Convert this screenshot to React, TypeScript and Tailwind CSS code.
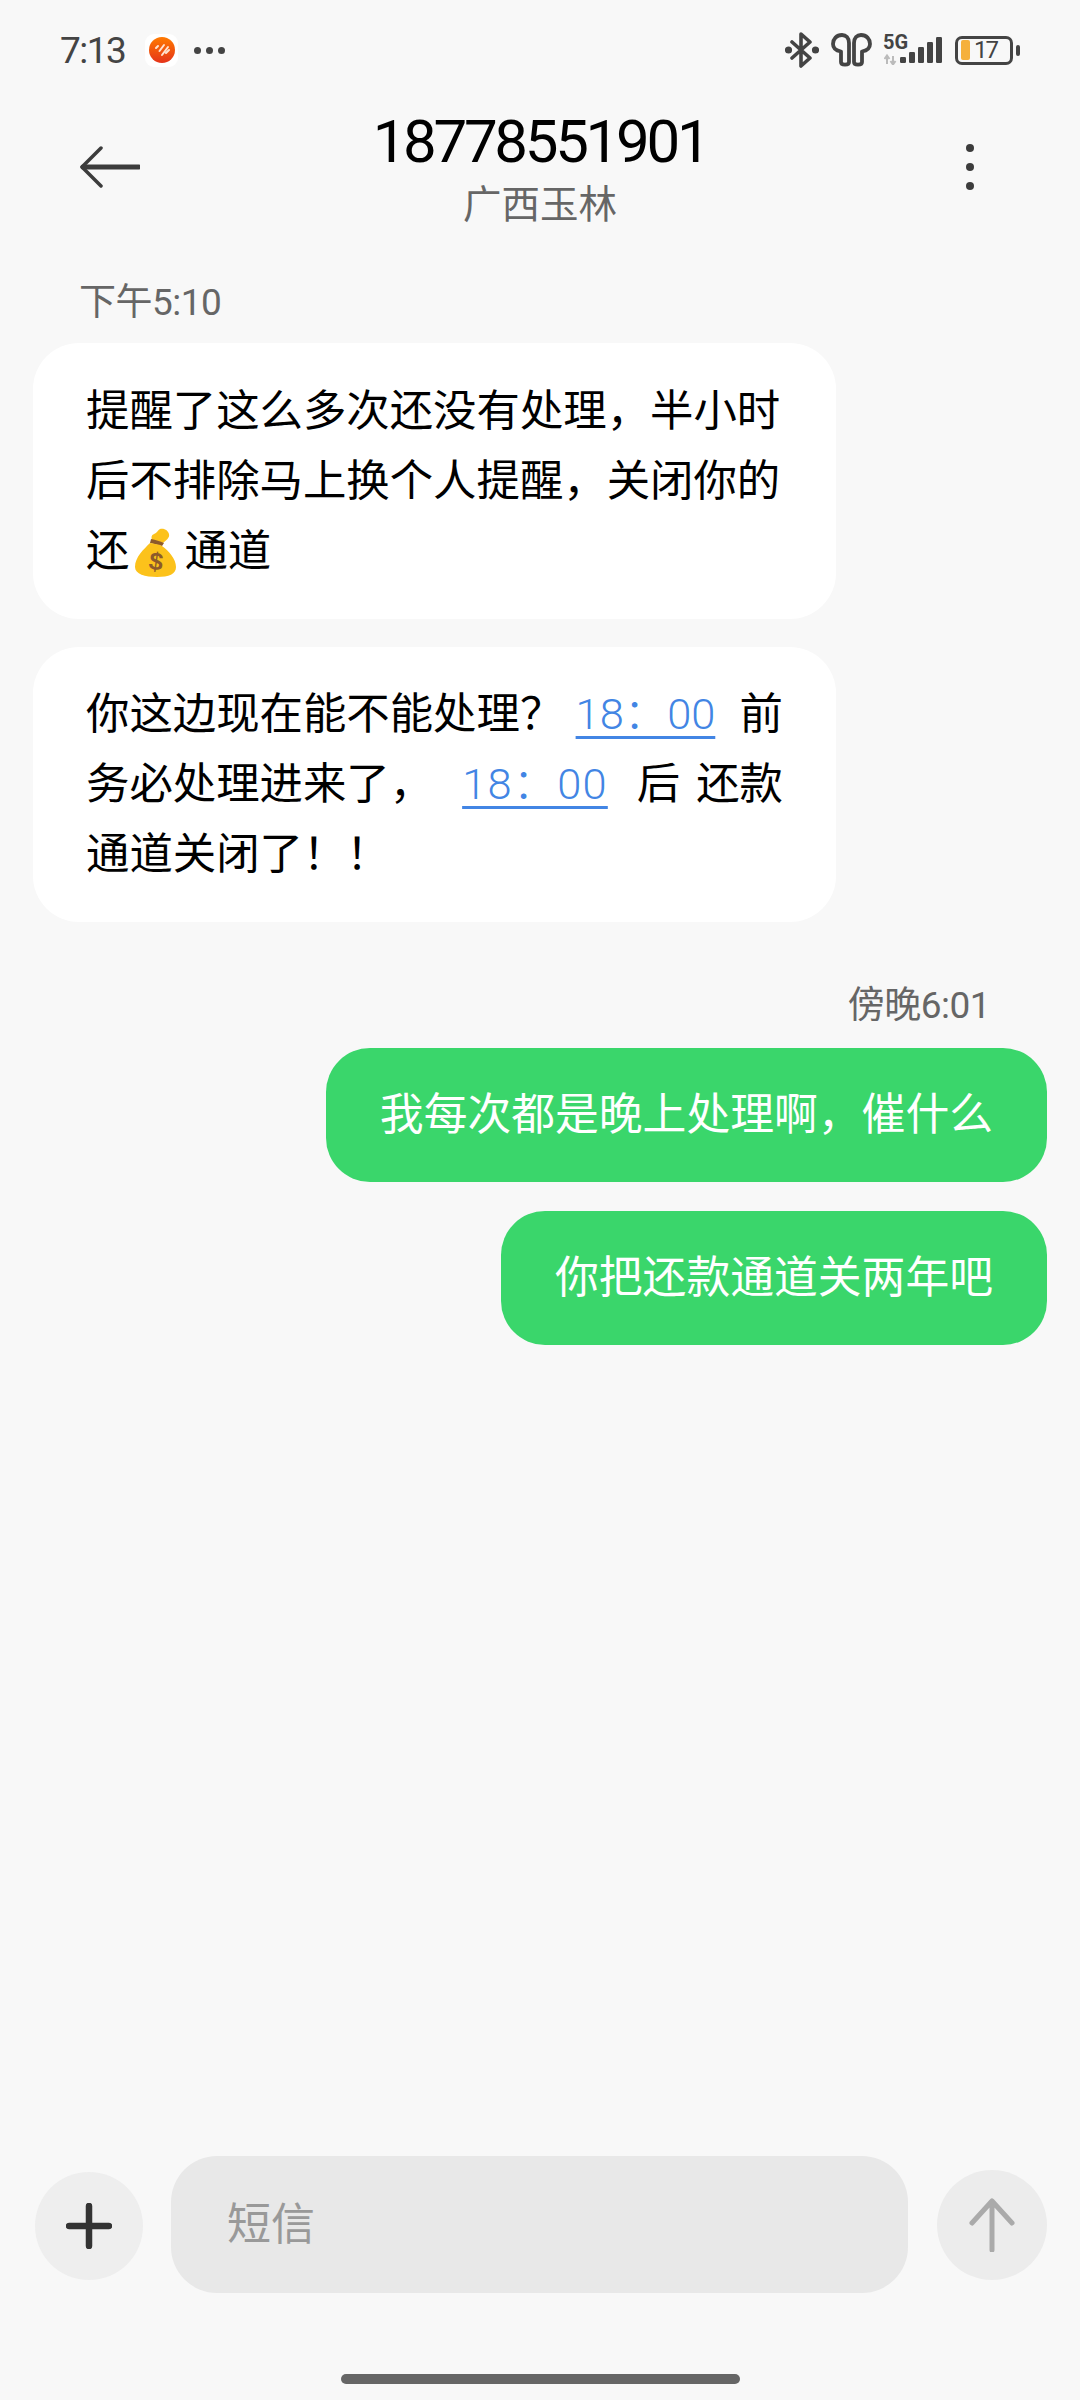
const link = "font-light text-[#4285e4] underline decoration-[3px] underline-offset-[7px]";

function AppDot() {
  return (
    <div className="ml-[20px] flex h-[33px] w-[33px] items-center justify-center rounded-[9px] bg-white">
      <svg width="26" height="26" viewBox="0 0 26 26">
        <defs>
          <linearGradient id="appGrad" x1="0" y1="0" x2="0" y2="1">
            <stop offset="0" stopColor="#ff7a00" />
            <stop offset="1" stopColor="#e5341a" />
          </linearGradient>
        </defs>
        <circle cx="13" cy="13" r="13" fill="url(#appGrad)" />
        <path d="M7 11l2-2M10.500 14l4.500-6M13 18l6-8M17 16l3-3" stroke="#ffe3d0" strokeWidth="2" strokeLinecap="round" />
      </svg>
    </div>
  );
}

function StatusIcons() {
  return (
    <div className="flex items-center">
      {/* bluetooth */}
      <svg width="34" height="36" viewBox="0 0 34 36" fill="none" stroke="#444" strokeWidth="3.600" strokeLinejoin="round" strokeLinecap="round">
        <path d="M7 10l18 16-9 8V2l9 8-18 16" />
        <circle cx="3.500" cy="18" r="1.800" fill="#444" />
        <circle cx="30.500" cy="18" r="1.800" fill="#444" />
      </svg>
      {/* earbuds */}
      <svg className="ml-[12px]" width="41" height="34" viewBox="0 0 41 34" fill="none" stroke="#444" strokeWidth="3.800" strokeLinecap="round" strokeLinejoin="round">
        <path d="M11 2C5.500 2 2 6 2 11c0 4 2.500 6.500 8 7.500V29c0 3.500 8 3.500 8 0V10c0-5-3-8-7-8z" />
        <path d="M30 2c5.500 0 9 4 9 9 0 4-2.500 6.500-8 7.500V29c0 3.500-8 3.500-8 0V10c0-5 3-8 7-8z" />
      </svg>
      {/* 5G and signal */}
      <div className="relative ml-[12px] h-[30px] w-[62px]">
        <span className="absolute left-[-1px] top-[-3px] text-[20px] font-bold leading-[20px] text-[#444]">5G</span>
        <svg className="absolute left-0 top-0" width="62" height="30" viewBox="0 0 62 30">
          <path d="M3 21v8M0.500 24L3 20.500l2.500 3.500M9 29v-8M6.500 26L9 29.500l2.500-3.500" stroke="#bbb" strokeWidth="2" fill="none" />
          <rect x="16" y="22" width="6" height="6" rx="1.200" fill="#444" />
          <rect x="25" y="17" width="6" height="11" rx="1.200" fill="#444" />
          <rect x="34" y="12" width="6" height="16" rx="1.200" fill="#444" />
          <rect x="43" y="7" width="6" height="21" rx="1.200" fill="#444" />
          <rect x="52" y="2" width="6" height="26" rx="1.200" fill="#444" />
        </svg>
      </div>
      {/* battery */}
      <div className="ml-[9px] flex items-center">
        <div className="flex h-[29px] w-[58px] items-center rounded-[7px] border-[3px] border-[#444] pl-[3px]">
          <div className="h-[20px] w-[9px] rounded-[2px] bg-[#f5b03c]" />
          <span className="ml-[4px] text-[24px] leading-[22px] tracking-[-2px] text-[#444]">17</span>
        </div>
        <div className="ml-[3px] h-[11px] w-[4px] rounded-[2px] bg-[#444]" />
      </div>
    </div>
  );
}

function MoneyBag() {
  return (
    <svg className="inline-block align-[-11px]" width="55" height="49" viewBox="0 0 55 49">
      <path d="M31 1c5-1 8 2 9 5 1 4-3 6-6 9l-11-3c-1-4 0-5 2-6 3-1 4-4 6-5z" fill="#fcc21b" />
      <path d="M22 11c5 1 9 2 13 4l-2 3-12-3z" fill="#8d5a2b" />
      <path d="M21 15c4 1 9 1 12 3 7 5 14 13 14 21 0 7-7 10-19 10S6 46 6 39c0-10 9-18 15-24z" fill="#fcc21b" />
      <text x="27" y="42" textAnchor="middle" fontSize="25" fontWeight="700" fill="#8d5a2b" fontFamily="'Liberation Sans',sans-serif" transform="rotate(8 27 34)">$</text>
    </svg>
  );
}

export default function App() {
  return (
    <div className="flex h-[2400px] w-[1080px] flex-col overflow-hidden bg-[#f8f8f8] font-[Roboto,'Noto_Sans_CJK_SC',sans-serif] text-black">
      {/* Status bar */}
      <div className="flex h-[100px] items-center justify-between pl-[60px] pr-[60px]">
        <div className="flex items-center">
          <span className="text-[37px] leading-none tracking-[-1.500px] text-[#444]">7:13</span>
          <AppDot />
          <div className="ml-[16px] flex gap-[5px]">
            <div className="h-[7px] w-[7px] rounded-full bg-[#444]" />
            <div className="h-[7px] w-[7px] rounded-full bg-[#444]" />
            <div className="h-[7px] w-[7px] rounded-full bg-[#444]" />
          </div>
        </div>
        <StatusIcons />
      </div>

      {/* Header */}
      <div className="grid h-[135px] grid-cols-[1fr_auto_1fr] items-start px-[80px]">
        <svg className="mt-[46px]" width="60" height="42" viewBox="0 0 60 42" fill="none" stroke="#3c3c3c" strokeLinecap="round" strokeLinejoin="round">
          <path d="M21 2L2 21l19 19" strokeWidth="3.500" />
          <path d="M3 21h56" strokeWidth="5" />
        </svg>
        <div className="flex flex-col items-center pt-[12px]">
          <span className="text-[60px] leading-[60px] tracking-[-3.300px]">18778551901</span>
          <span className="mt-[8px] text-[38.500px] leading-[50px] text-[#666]">广西玉林</span>
        </div>
        <div className="mt-[44px] flex flex-col items-end gap-[11px] pr-[26px]">
          <div className="h-[8px] w-[8px] rounded-full bg-[#3c3c3c]" />
          <div className="h-[8px] w-[8px] rounded-full bg-[#3c3c3c]" />
          <div className="h-[8px] w-[8px] rounded-full bg-[#3c3c3c]" />
        </div>
      </div>

      {/* Messages */}
      <div className="flex flex-col px-[33px] pt-[43px]">
        <span className="pl-[46px] text-[37px] leading-[50px] tracking-[-0.500px] text-[#666]">下午5:10</span>
        <div className="mt-[15px] w-[803px] rounded-[46px] bg-white px-[53px] pb-[32px] pt-[34px] text-[43.400px] leading-[70px]">
          <div>提醒了这么多次还没有处理，半小时</div>
          <div>后不排除马上换个人提醒，关闭你的</div>
          <div>还<MoneyBag />通道</div>
        </div>
        <div className="mt-[28px] w-[803px] rounded-[46px] bg-white px-[53px] pb-[32px] pt-[33px] text-[43.400px] leading-[70px]">
          <div className="flex justify-between">
            <span>你这边现在能不能处理？</span>
            <span className={`mr-[12px] ${link}`}>18：00</span>
            <span>前</span>
          </div>
          <div className="flex">
            <span>务必处理进来了，</span>
            <span className={`ml-[29px] tracking-[1.200px] ${link}`}>18：00</span>
            <span className="ml-[29px]">后</span>
            <span className="ml-auto">还款</span>
          </div>
          <div>通道关闭了！！</div>
        </div>
        <span className="mt-[59px] self-end pr-[57px] text-[37px] leading-[50px] tracking-[-0.500px] text-[#666]">傍晚6:01</span>
        <div className="mt-[17px] self-end rounded-[44px] bg-[#3ad66b] px-[54px] py-[32px] text-[43.800px] leading-[70px] text-white">
          我每次都是晚上处理啊，催什么
        </div>
        <div className="mt-[29px] self-end rounded-[44px] bg-[#3ad66b] px-[54px] py-[32px] text-[43.800px] leading-[70px] text-white">
          你把还款通道关两年吧
        </div>
      </div>

      {/* Input bar */}
      <div className="mt-auto flex items-center pl-[35px] pr-[33px]">
        <div className="mt-[2px] flex h-[108px] w-[108px] items-center justify-center rounded-full bg-[#eeeeee]">
          <svg width="46" height="46" viewBox="0 0 46 46" stroke="#333" strokeLinecap="round" strokeWidth="6.500">
            <path d="M23 3v40M3 23h40" />
          </svg>
        </div>
        <div className="ml-[28px] flex h-[137px] w-[737px] items-center rounded-[46px] bg-[#e8e8e8] pl-[56px] text-[44px] text-[#999]">
          短信
        </div>
        <div className="ml-[29px] flex h-[110px] w-[110px] items-center justify-center rounded-full bg-[#ececec]">
          <svg width="46" height="54" viewBox="0 0 46 54" fill="none" stroke="#aaa" strokeLinecap="round" strokeLinejoin="round" strokeWidth="5">
            <path d="M23 52V3M3 25L23 3l20 22" />
          </svg>
        </div>
      </div>

      {/* Home indicator */}
      <div className="flex justify-center pb-[16px] pt-[81px]">
        <div className="h-[10px] w-[399px] rounded-full bg-[#666]" />
      </div>
    </div>
  );
}
